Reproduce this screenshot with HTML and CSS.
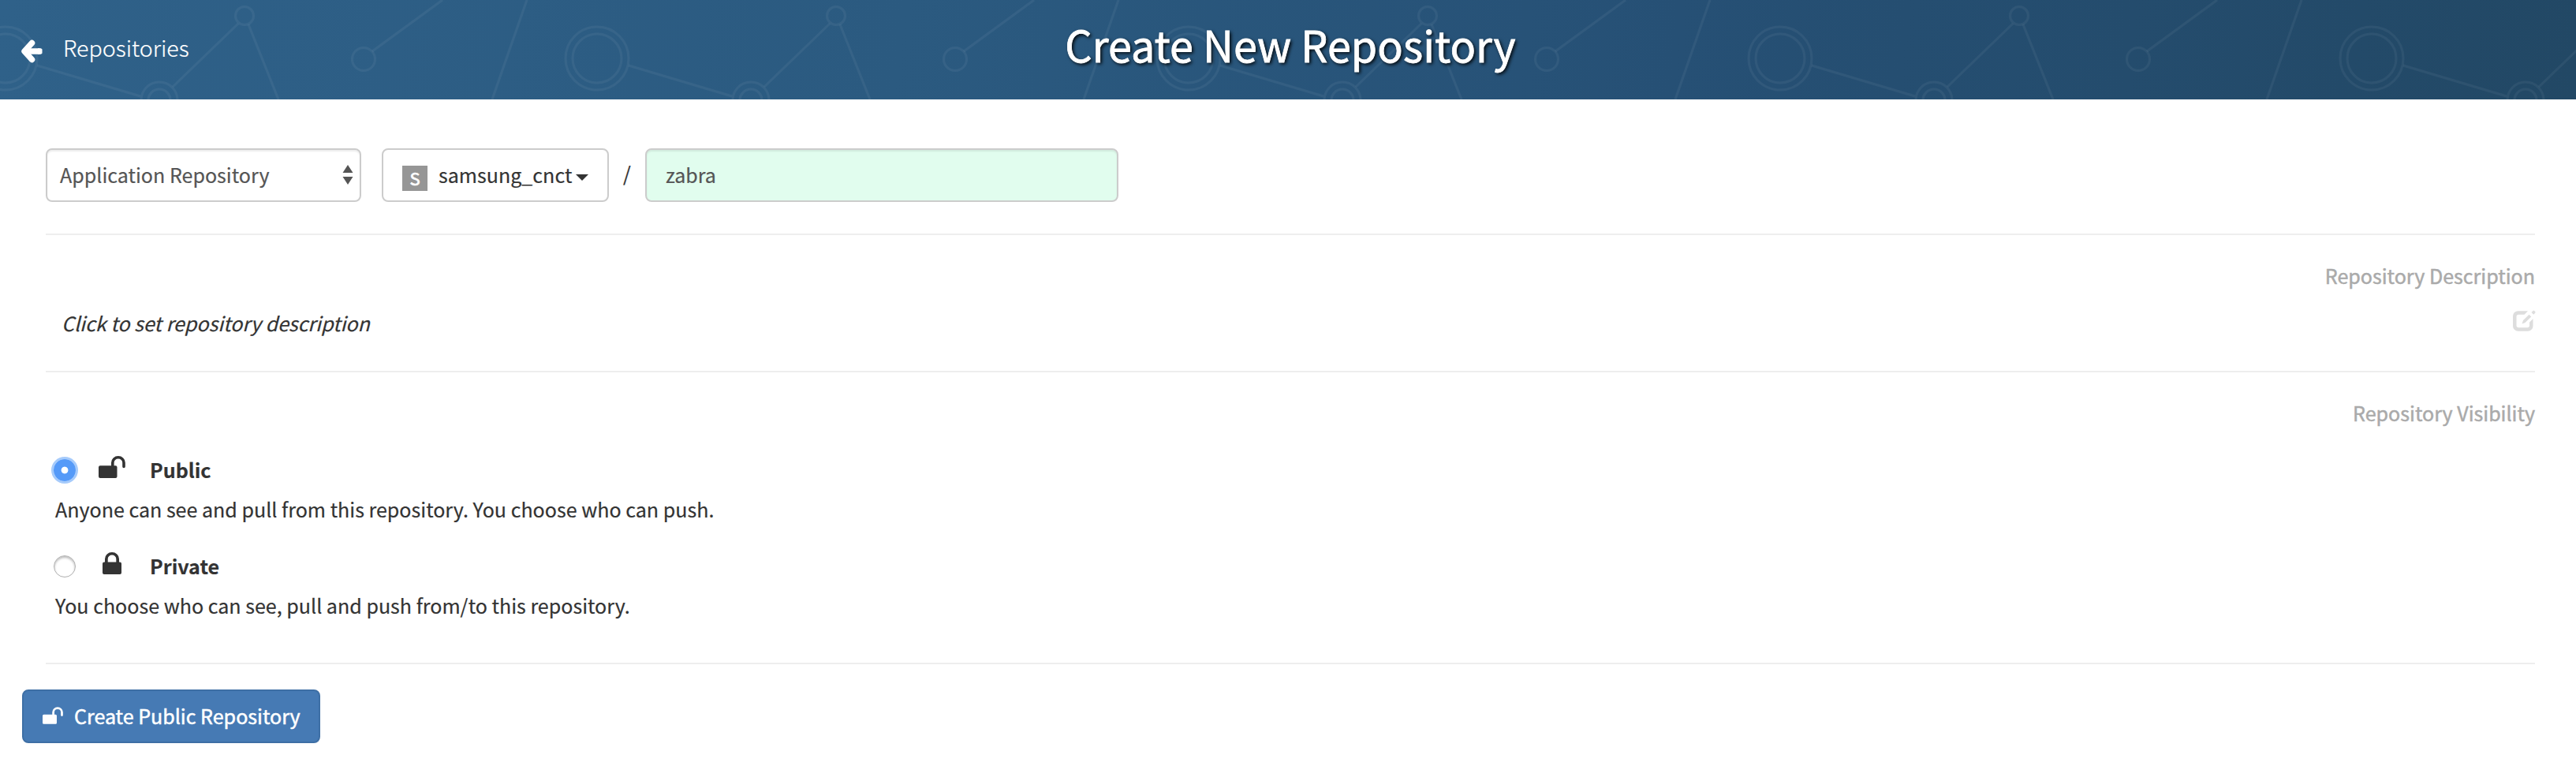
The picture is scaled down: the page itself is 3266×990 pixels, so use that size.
FILE: index.html
```
<!DOCTYPE html>
<html lang="en">
<head>
<meta charset="utf-8">
<title>Create New Repository</title>
<link rel="stylesheet" href="styles.css">
</head>
<body>
<svg width="0" height="0" class="defs">
  <symbol id="unlock" viewBox="0 0 34 28"><path d="M2 12.300H16V8.500a8.900 8.500 0 0 1 17.800 0V13.500a1.700 1.700 0 0 1-3.600 0V8.500a5.300 5 0 0 0-10.600 0V12.300H21.500a2 2 0 0 1 2 2V26a2 2 0 0 1-2 2H2a2 2 0 0 1-2-2V14.300a2 2 0 0 1 2-2z"/></symbol>
  <symbol id="lock" viewBox="0 0 24 28"><path fill-rule="evenodd" d="M3 12.500V8.500a9 8.500 0 0 1 18 0V12.500H22a2 2 0 0 1 2 2V26a2 2 0 0 1-2 2H2a2 2 0 0 1-2-2V14.500a2 2 0 0 1 2-2zM6.700 12.500H17.300V8.500a5.300 5 0 0 0-10.600 0z"/></symbol>
</svg>
<header class="header">
  <svg class="pattern" width="3266" height="126" aria-hidden="true">
    <defs>
      <pattern id="net" width="750" height="126" patternUnits="userSpaceOnUse">
        <g fill="none" stroke="#fff" stroke-opacity=".05" stroke-width="3">
          <circle cx="7" cy="74" r="40"/><circle cx="757" cy="74" r="40"/>
          <circle cx="7" cy="74" r="31"/><circle cx="757" cy="74" r="31"/>
          <path d="M47 83L178 122M219 110L302 30M315 31L353 126M472 65L561 0M668 0L624 126"/>
          <circle cx="202" cy="127" r="23"/><circle cx="202" cy="127" r="14"/>
          <circle cx="310" cy="20" r="11.500"/><circle cx="461" cy="75" r="14.500"/>
        </g>
      </pattern>
    </defs>
    <rect width="3266" height="126" fill="url(#net)"/>
  </svg>
  <a class="back">
    <svg width="28" height="30" viewBox="0 0 28 30"><path d="M14.500 4.500L5 15L14.500 25.500" fill="none" stroke="#fff" stroke-width="7.500" stroke-linecap="round" stroke-linejoin="round"/><path d="M6 15H24.500" stroke="#fff" stroke-width="7.500"/><path d="M22 11.250H26L27.500 12.500V17.500L26 18.750H22z" fill="#fff"/></svg>
    <span>Repositories</span>
  </a>
  <h1 class="title"><span>Create New Repository</span></h1>
</header>
<main class="content">
  <section class="row names">
    <div class="select"><span>Application Repository</span>
      <svg width="14" height="26" viewBox="0 0 14 26"><path d="M7 0L13.500 10H.5zM.5 15H13.500L7 25z" fill="#555"/></svg></div>
    <div class="namespace"><span class="avatar">S</span><span>samsung_cnct</span>
      <svg width="16" height="8" viewBox="0 0 16 8"><path d="M0 0H16L8 8z" fill="#333"/></svg></div>
    <span class="slash">/</span>
    <div class="input"><span>zabra</span></div>
  </section>
  <section class="row description">
    <div class="label"><span>Repository Description</span></div>
    <div class="desc"><em>Click to set repository description</em>
      <svg width="30" height="28" viewBox="0 0 30 28"><path d="M20 1.200H7.500A6.500 6.500 0 0 0 1 7.700V20.200A6.500 6.500 0 0 0 7.500 26.700H20A6.500 6.500 0 0 0 26.500 20.200V11L22 15.500V19.500A2.800 2.800 0 0 1 19.200 22.300H8.300A2.800 2.800 0 0 1 5.500 19.500V8.500A2.800 2.800 0 0 1 8.300 5.700H15.500zM12.500 17.500L14 13L21.500 5.700L24.300 8.500L16.500 16zM24.500 3L26.500 1Q27.300.2 28.100 1L29.200 2.100Q30 2.900 29.200 3.700L27.200 5.700z" fill="#ddd"/></svg></div>
  </section>
  <section class="row visibility">
    <div class="label"><span>Repository Visibility</span></div>
    <div class="option"><i class="radio on"></i><svg class="ico-unlock" width="34" height="28"><use href="#unlock"/></svg><b>Public</b></div>
    <p><span>Anyone can see and pull from this repository. You choose who can push.</span></p>
    <div class="option second"><i class="radio"></i><svg class="ico-lock" width="24" height="28"><use href="#lock"/></svg><b>Private</b></div>
    <p><span>You choose who can see, pull and push from/to this repository.</span></p>
  </section>
</main>
<button class="create"><svg width="26" height="22"><use href="#unlock"/></svg><span>Create Public Repository</span></button>
</body>
</html>
```
FILE: styles.css
```
* { box-sizing: border-box; }
body { margin: 0; height: 990px; background: #fff; color: #333; font: 25.060px/40px "Noto Sans CJK SC", "Open Sans", sans-serif; -webkit-text-stroke: .2px currentColor; overflow: hidden; }
svg { flex: none; display: block; }
span, em, b { white-space: nowrap; }
.defs { position: absolute; }
.header { position: relative; height: 126px; background: linear-gradient(97deg, #2f6189 0%, #2b5a80 35%, #265075 65%, #224865 100%); color: #fff; display: grid; grid-template-columns: 1fr auto 1fr; align-items: center; }
.pattern { position: absolute; left: 0; top: 0; }
.back { position: relative; display: flex; align-items: center; padding-left: 26px; gap: 26px; font-size: 28.600px; font-weight: 300; margin-top: -6px; }
.back svg { margin-top: 10px; }
.title { position: relative; margin: 0; font-size: 53.900px; font-weight: 400; line-height: 80px; padding: 0 0 14px 6px; text-shadow: 2px 2px 4px #000; -webkit-text-stroke: .8px #fff; }
.content { margin: 0 52px 0 58px; }
.row { border-bottom: 2px solid #eee; }
.names { height: 172px; padding-top: 62px; display: flex; align-items: flex-start; }
.select, .namespace, .input { height: 68px; border: 2px solid #ccc; border-radius: 8px; display: flex; align-items: center; }
.select span, .namespace span, .input span { margin-bottom: 2px; }
.select { width: 400px; padding: 0 8px 0 16px; justify-content: space-between; color: #555; box-shadow: inset 0 2px 2px rgba(0,0,0,.075); }
.namespace { width: 288px; margin-left: 26px; padding-left: 24px; }
.namespace .avatar { width: 32px; height: 32px; margin: 8px 14px 0 0; background: #969696; color: #fff; font-size: 22px; line-height: 31px; text-align: center; -webkit-text-stroke: .7px #fff; }
.namespace svg { margin-left: 5px; margin-top: 6px; }
.slash { width: 46px; line-height: 62px; padding-left: 18px; }
.input { width: 600px; padding-left: 24px; background: #e1fdee; color: #555; box-shadow: inset 0 2px 2px rgba(0,0,0,.075); }
.description { height: 174px; padding-top: 31px; }
.label { text-align: right; color: #aaa; height: 40px; -webkit-text-stroke: .5px #aaa; }
.desc { display: flex; justify-content: space-between; align-items: center; padding-left: 20px; margin-top: 20px; height: 40px; margin-right: -1px; }
.desc svg { margin-bottom: 4px; }
.visibility { height: 370px; padding-top: 31px; }
.option { display: flex; align-items: center; height: 40px; padding-left: 10px; margin-top: 33px; }
.option.second { margin-top: 33px; }
.option b { margin-bottom: 2px; }
.radio { width: 28px; height: 28px; border-radius: 50%; flex: none; border: 1px solid #b0b0b0; box-shadow: inset 0 2px 3px #bbb; }
.radio.on { border: 0; background: radial-gradient(circle, #fff 0 4px, #559af8 4.800px); box-shadow: 0 0 0 3px #a6cbfb; }
.ico-unlock { margin: 0 31px 8px 29px; fill: #333; }
.ico-lock { margin: 0 36px 8px 34px; fill: #333; }
p { margin: 9px 0 0 12px; height: 40px; }
.create { display: flex; align-items: center; width: 378px; height: 68px; margin: 32px 0 0 28px; padding: 0 0 0 24px; border: 2px solid #3e6fa5; border-radius: 8px; background: #467ab4; color: #fff; font: 400 25.060px/40px "Noto Sans CJK SC", "Open Sans", sans-serif; -webkit-text-stroke: .5px #fff; gap: 14px; }
.create svg { fill: #fff; margin-bottom: 2px; }
.create span { margin-bottom: 2px; }
```
